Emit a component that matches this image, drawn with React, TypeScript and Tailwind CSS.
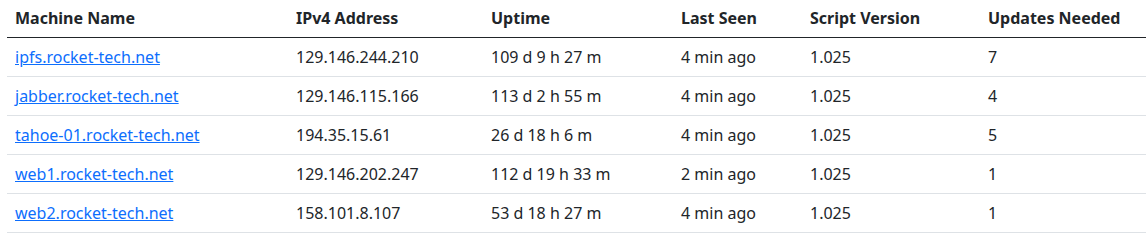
const rows = [
  { name: "ipfs.rocket-tech.net", ip: "129.146.244.210", uptime: "109 d 9 h 27 m", seen: "4 min ago", version: "1.025", updates: "7" },
  { name: "jabber.rocket-tech.net", ip: "129.146.115.166", uptime: "113 d 2 h 55 m", seen: "4 min ago", version: "1.025", updates: "4" },
  { name: "tahoe-01.rocket-tech.net", ip: "194.35.15.61", uptime: "26 d 18 h 6 m", seen: "4 min ago", version: "1.025", updates: "5" },
  { name: "web1.rocket-tech.net", ip: "129.146.202.247", uptime: "112 d 19 h 33 m", seen: "2 min ago", version: "1.025", updates: "1" },
  { name: "web2.rocket-tech.net", ip: "158.101.8.107", uptime: "53 d 18 h 27 m", seen: "4 min ago", version: "1.025", updates: "1" },
];

export default function App() {
  return (
    <div className="bg-white pl-[7px] font-['Noto_Sans',sans-serif] text-[16px] leading-6 text-[#212529]">
      <table className="w-[1139px] table-fixed border-collapse">
        <colgroup>
          <col className="w-[281px]" />
          <col className="w-[195px]" />
          <col className="w-[190px]" />
          <col className="w-[129px]" />
          <col className="w-[178px]" />
          <col />
        </colgroup>
        <thead>
          <tr className="border-b border-[#212529]">
            {["Machine Name", "IPv4 Address", "Uptime", "Last Seen", "Script Version", "Updates Needed"].map((h) => (
              <th key={h} className="h-[37px] px-2 pb-[1px] text-left align-middle font-bold">
                {h}
              </th>
            ))}
          </tr>
        </thead>
        <tbody>
          {rows.map((r) => (
            <tr key={r.name} className="border-b border-[#dee2e6]">
              <td className="h-[39px] px-2 align-middle">
                <a href="#" className="text-[#0d6efd] underline">
                  {r.name}
                </a>
              </td>
              <td className="px-2 align-middle">{r.ip}</td>
              <td className="px-2 align-middle">{r.uptime}</td>
              <td className="px-2 align-middle">{r.seen}</td>
              <td className="px-2 align-middle">{r.version}</td>
              <td className="px-2 align-middle">{r.updates}</td>
            </tr>
          ))}
        </tbody>
      </table>
    </div>
  );
}
